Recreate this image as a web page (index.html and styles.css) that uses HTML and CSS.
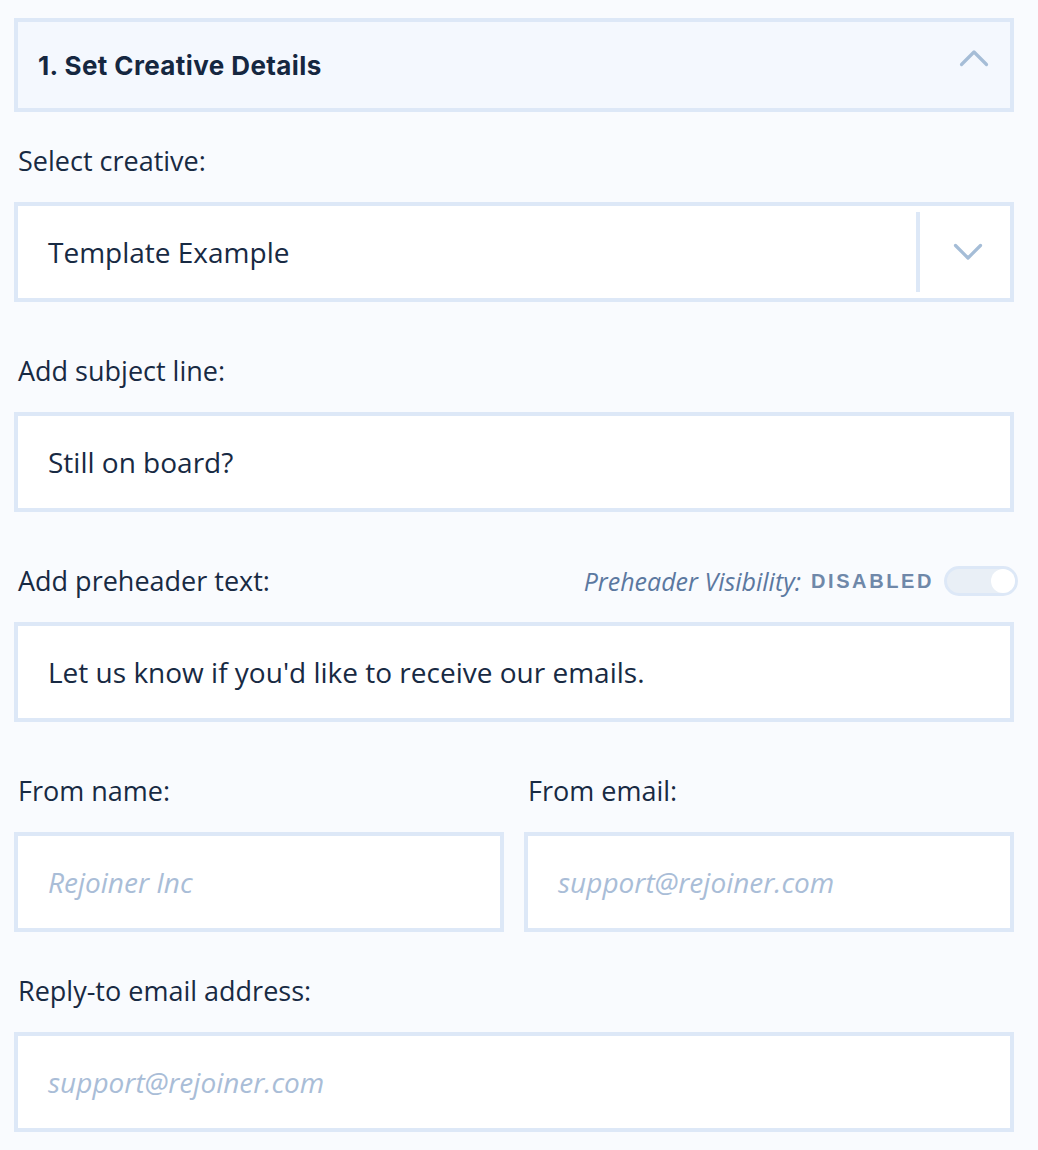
FILE: index.html
```html
<!DOCTYPE html>
<html lang="en">
<head>
<meta charset="utf-8">
<title>Set Creative Details</title>
<link rel="stylesheet" href="styles.css">
</head>
<body>
<div class="panel">
  <div class="section-head">
    <h2 class="section-title">1. Set Creative Details</h2>
    <svg class="chev-up" width="30" height="18" viewBox="0 0 30 18"><path d="M2.5 15.5 L15 3 L27.5 15.5" fill="none" stroke="#a5bdd7" stroke-width="3.2" stroke-linecap="round" stroke-linejoin="round"/></svg>
  </div>

  <div class="field first">
    <div class="label">Select creative:</div>
    <div class="box select">
      <span class="value">Template Example</span>
      <span class="sep"></span>
      <span class="select-arrow"><svg width="30" height="18" viewBox="0 0 30 18"><path d="M2.5 2.5 L15 15 L27.5 2.5" fill="none" stroke="#a5bdd7" stroke-width="3.2" stroke-linecap="round" stroke-linejoin="round"/></svg></span>
    </div>
  </div>

  <div class="field">
    <div class="label">Add subject line:</div>
    <div class="box"><span class="value">Still on board?</span></div>
  </div>

  <div class="field">
    <div class="label-row">
      <div class="label">Add preheader text:</div>
      <div class="visibility">
        <span class="vis-label">Preheader Visibility:</span>
        <span class="vis-state">DISABLED</span>
        <span class="toggle"><span class="knob"></span></span>
      </div>
    </div>
    <div class="box"><span class="value">Let us know if you'd like to receive our emails.</span></div>
  </div>

  <div class="field">
    <div class="split">
      <div class="col">
        <div class="label">From name:</div>
        <div class="box"><span class="placeholder">Rejoiner Inc</span></div>
      </div>
      <div class="col">
        <div class="label">From email:</div>
        <div class="box"><span class="placeholder">support@rejoiner.com</span></div>
      </div>
    </div>
  </div>

  <div class="field last">
    <div class="label">Reply-to email address:</div>
    <div class="box"><span class="placeholder">support@rejoiner.com</span></div>
  </div>
</div>
</body>
</html>
```

FILE: styles.css
```css
html, body {
  margin: 0;
  padding: 0;
  background: #f9fbfe;
}
body {
  font-family: "Open Sans", "Noto Sans", sans-serif;
  color: #182a43;
}
.panel {
  width: 1000px;
  margin: 18px 0 0 14px;
}
.section-head {
  box-sizing: border-box;
  height: 94px;
  border: 4px solid #dde8f7;
  background: #f4f8fe;
  display: flex;
  align-items: center;
  justify-content: space-between;
  padding: 0 21px 0 20px;
}
.section-title {
  margin: 0;
  font-family: Inter, Roboto, sans-serif;
  font-weight: 700;
  font-size: 26px;
  letter-spacing: 0.4px;
  color: #152740;
}
.chev-up {
  display: block;
  margin-top: -14px;
}
.field {
  margin-top: 51px;
}
.field.first {
  margin-top: 31px;
}
.field.last {
  margin-top: 41px;
}
.label {
  font-size: 27px;
  line-height: 36px;
  height: 36px;
  margin-bottom: 23px;
  padding-left: 4px;
  white-space: nowrap;
}
.label-row {
  display: flex;
  justify-content: space-between;
  align-items: flex-start;
}
.visibility {
  display: flex;
  align-items: center;
  height: 36px;
  margin-right: -4px;
}
.vis-label {
  font-style: italic;
  font-size: 25px;
  color: #5b78a0;
  margin-right: 10px;
}
.vis-state {
  font-family: "Liberation Sans", Arial, sans-serif;
  font-weight: 700;
  font-size: 20px;
  letter-spacing: 2.6px;
  color: #6f88a9;
  margin-right: 10px;
}
.toggle {
  box-sizing: border-box;
  width: 74px;
  height: 30px;
  border-radius: 15px;
  border: 3px solid #dde8f7;
  background: #e9eff6;
  display: flex;
  justify-content: flex-end;
  align-items: center;
}
.knob {
  width: 24px;
  height: 24px;
  border-radius: 50%;
  background: #ffffff;
}
.box {
  box-sizing: border-box;
  height: 100px;
  border: 4px solid #dde8f7;
  background: #ffffff;
  display: flex;
  align-items: center;
  padding-left: 30px;
  font-size: 28px;
}
.value {
  color: #182a43;
  flex: 1;
  white-space: nowrap;
}
.placeholder {
  font-style: italic;
  color: #a9bdd7;
  white-space: nowrap;
}
.select {
  padding-right: 0;
}
.sep {
  align-self: stretch;
  width: 4px;
  margin: 6px 0;
  background: #dde8f7;
}
.select-arrow {
  box-sizing: border-box;
  width: 90px;
  display: flex;
  justify-content: center;
  align-items: center;
  padding-left: 6px;
}
.select-arrow svg {
  display: block;
}
.split {
  display: grid;
  grid-template-columns: 1fr 1fr;
  column-gap: 20px;
}
```
